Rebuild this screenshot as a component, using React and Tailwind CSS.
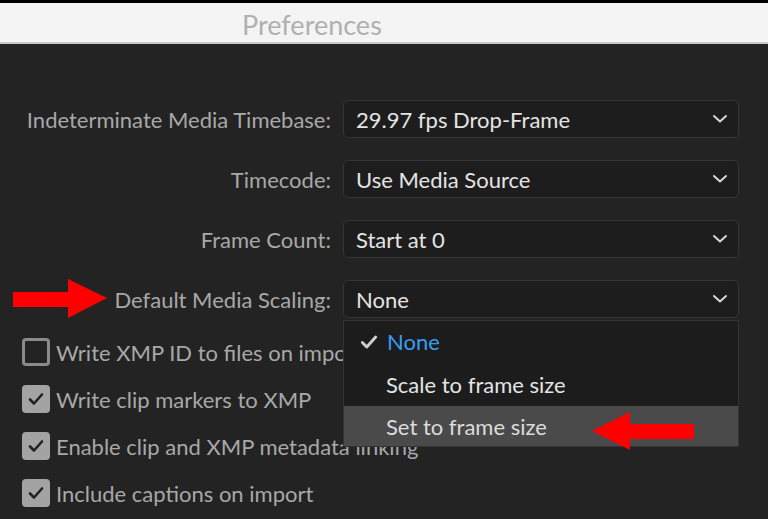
import React from 'react';

const font = { fontFamily: 'Lato, "Open Sans", sans-serif' };

const rows = [
  { label: 'Indeterminate Media Timebase:', value: '29.97 fps Drop-Frame' },
  { label: 'Timecode:', value: 'Use Media Source' },
  { label: 'Frame Count:', value: 'Start at 0' },
  { label: 'Default Media Scaling:', value: 'None' },
];

const checks = [
  { label: 'Write XMP ID to files on import', checked: false },
  { label: 'Write clip markers to XMP', checked: true },
  { label: 'Enable clip and XMP metadata linking', checked: true },
  { label: 'Include captions on import', checked: true },
];

const Chevron = () => (
  <svg width="16" height="10" viewBox="0 0 16 10" fill="none">
    <path d="M2 2l6 5.5L14 2" stroke="#d8d8d8" strokeWidth="2" strokeLinecap="round" strokeLinejoin="round" />
  </svg>
);

const Tick = ({ color = '#222', size = 18 }) => (
  <svg width={size} height={size} viewBox="0 0 18 18" fill="none">
    <path d="M3 9.5l4 4L15 4.5" stroke={color} strokeWidth="2.6" strokeLinecap="round" strokeLinejoin="round" />
  </svg>
);

// big red annotation arrows
const RightArrow = () => (
  <svg width="95" height="40" viewBox="0 0 95 40">
    <polygon points="0,13 55,13 55,0 94,19 55,39 55,28 0,28" fill="#ff0000" />
  </svg>
);

const LeftArrow = () => (
  <svg width="103" height="40" viewBox="0 0 103 40">
    <polygon points="0,20 38,1 38,13 102,13 102,28 38,28 38,39" fill="#ff0000" />
  </svg>
);

export default function App() {
  return (
    <div className="relative w-[768px] h-[519px] overflow-hidden bg-[#232323]" style={font}>
      {/* title bar */}
      <div className="h-[3px] bg-black" />
      <div className="h-[41px] bg-[#f4f4f4] border-b-2 border-[#c9c9c9] flex items-center pl-[242px] pt-[3px]">
        <span className="text-[27px] text-[#b0b0b0] leading-none">Preferences</span>
      </div>

      {/* dropdown rows */}
      <div className="pt-[56px] pr-[29px] flex flex-col gap-[22px]">
        {rows.map((row) => (
          <div key={row.label} className="grid grid-cols-[331px_1fr] gap-[12px] items-center">
            <div className="text-right text-[22px] text-[#a8a8a8] whitespace-nowrap">{row.label}</div>
            <div className="h-[38px] rounded-[5px] border border-[#363636] bg-[#1d1d1d] flex items-center justify-between pl-[12px] pr-[10px]">
              <span className="text-[22px] text-[#e4e4e4]">{row.value}</span>
              <Chevron />
            </div>
          </div>
        ))}
      </div>

      {/* checkboxes */}
      <div className="pl-[22px] pt-[20px] flex flex-col gap-[19px]">
        {checks.map((c) => (
          <div key={c.label} className="flex items-center gap-[6px] h-[28px]">
            {c.checked ? (
              <div className="w-[28px] h-[28px] rounded-[4px] bg-[#a3a3a3] flex items-center justify-center">
                <Tick />
              </div>
            ) : (
              <div className="w-[28px] h-[28px] rounded-[4px] border-[3px] border-[#8a8a8a]" />
            )}
            <span className="text-[22px] text-[#a8a8a8] whitespace-nowrap">{c.label}</span>
          </div>
        ))}
      </div>

      {/* open menu */}
      <div className="absolute left-[343px] top-[320px] w-[396px] h-[127px] bg-[#1c1c1c] border border-[#333] flex flex-col">
        <div className="h-[41px] flex items-center">
          <div className="w-[43px] flex justify-center pl-[6px]">
            <Tick color="#cfcfcf" size={20} />
          </div>
          <span className="text-[22px] text-[#3a9cf0]">None</span>
        </div>
        <div className="h-[44px] flex items-center pl-[42px]">
          <span className="text-[22px] text-[#e4e4e4]">Scale to frame size</span>
        </div>
        <div className="flex-1 bg-[#4a4a4a] flex items-center pl-[42px]">
          <span className="text-[22px] text-[#dcdcdc]">Set to frame size</span>
        </div>
      </div>

      <div className="absolute left-[13px] top-[279px]"><RightArrow /></div>
      <div className="absolute left-[592px] top-[411px]"><LeftArrow /></div>
    </div>
  );
}
